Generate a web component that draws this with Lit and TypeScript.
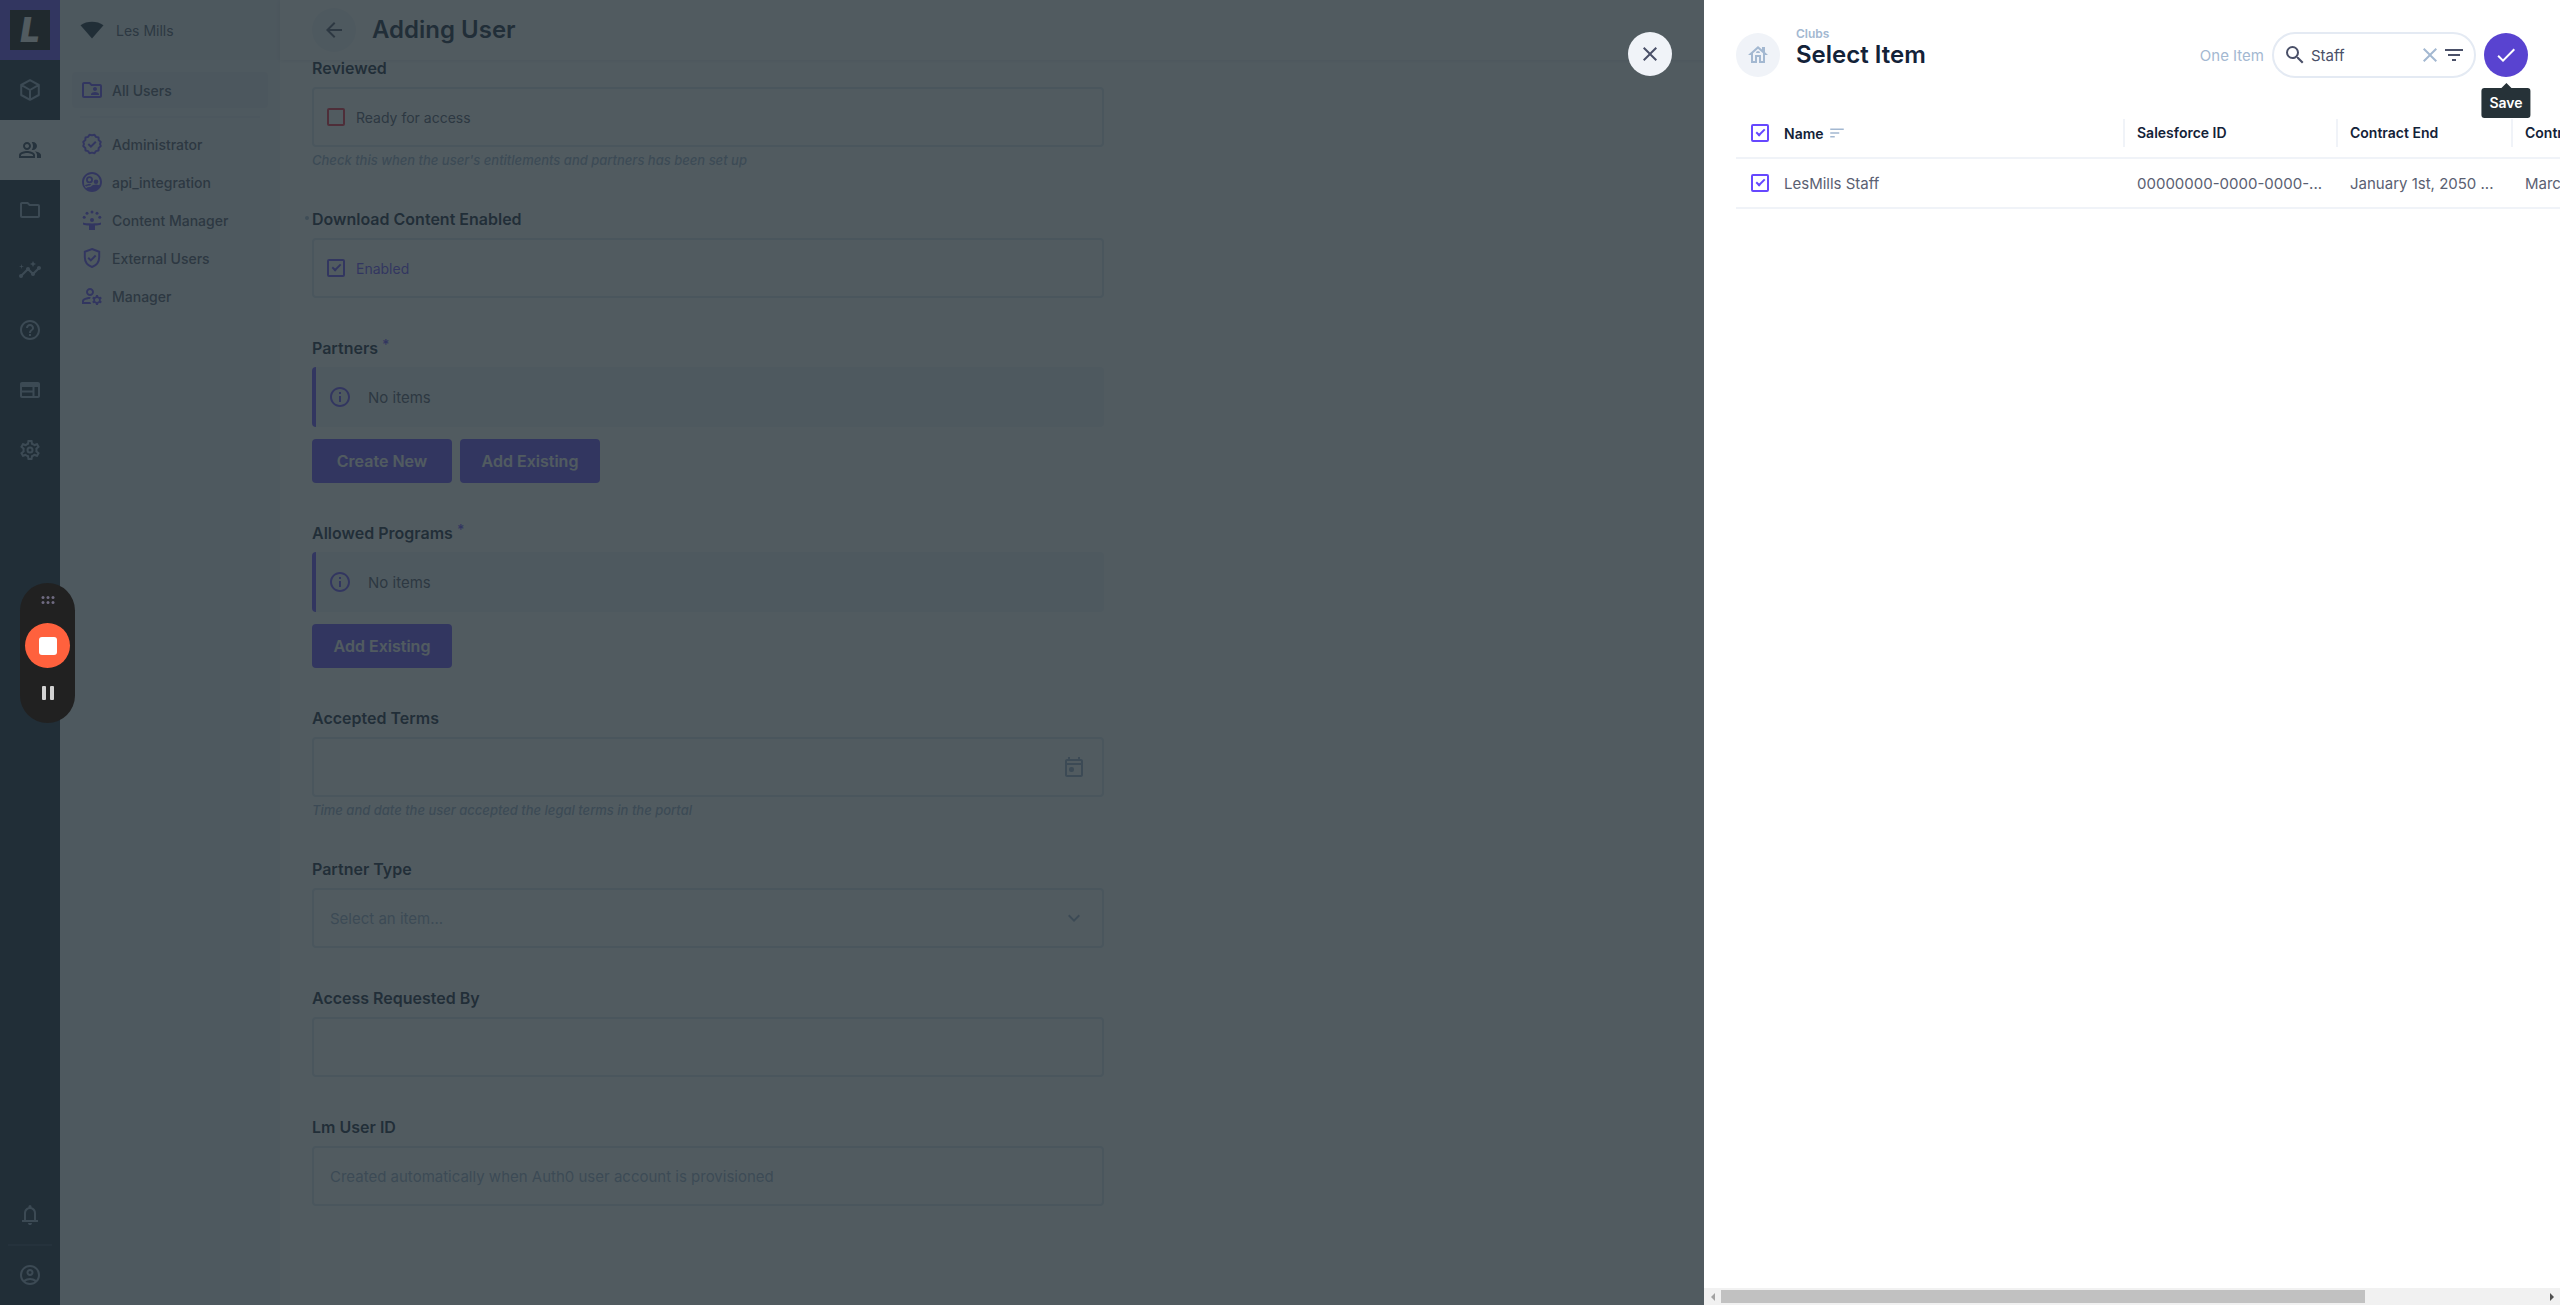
import { LitElement, html, css, svg, nothing } from "lit";
import { customElement, property } from "lit/decorators.js";
import { classMap } from "lit/directives/class-map.js";

const icons: Record<string, unknown> = {
  cube: svg`<path d="M12 2.2 20.8 7v10L12 21.8 3.2 17V7z M3.6 7.2 12 12l8.4-4.8 M12 12v9.6" fill="none" stroke="currentColor" stroke-width="2" stroke-linejoin="round"/>`,
  people: svg`<path d="M16.67 13.13C18.04 14.06 19 15.32 19 17v3h4v-3c0-2.18-3.57-3.47-6.33-3.87zM15 12c2.21 0 4-1.79 4-4s-1.79-4-4-4c-.47 0-.91.1-1.33.24C14.5 5.27 15 6.58 15 8s-.5 2.73-1.33 3.76c.42.14.86.24 1.33.24zM9 12c2.21 0 4-1.79 4-4s-1.79-4-4-4-4 1.79-4 4 1.79 4 4 4zm0-6c1.1 0 2 .9 2 2s-.9 2-2 2-2-.9-2-2 .9-2 2-2zM9 13c-2.67 0-8 1.34-8 4v3h16v-3c0-2.66-5.33-4-8-4zm6 5H3v-.99C3.2 16.29 6.3 15 9 15s5.8 1.29 6 2v1z"/>`,
  folder: svg`<path d="M9.17 6l2 2H20v10H4V6h5.17M10 4H4c-1.1 0-1.99.9-1.99 2L2 18c0 1.1.9 2 2 2h16c1.1 0 2-.9 2-2V8c0-1.1-.9-2-2-2h-8l-2-2z"/>`,
  insights: svg`<path d="M21 8c-1.45 0-2.26 1.44-1.93 2.51l-3.55 3.56c-.3-.09-.74-.09-1.04 0l-2.55-2.55C12.27 10.45 11.46 9 10 9c-1.45 0-2.27 1.44-1.93 2.52l-4.56 4.55C2.44 15.74 1 16.55 1 18c0 1.1.9 2 2 2 1.45 0 2.26-1.44 1.93-2.51l4.55-4.56c.3.09.74.09 1.04 0l2.55 2.55C12.73 16.55 13.54 18 15 18c1.45 0 2.27-1.44 1.93-2.52l3.56-3.55c1.07.33 2.51-.48 2.51-1.93 0-1.1-.9-2-2-2zM15 9l.94-2.07L18 6l-2.06-.93L15 3l-.92 2.07L12 6l2.08.93zM3.5 11L4 9l2-.5L4 8l-.5-2L3 8l-2 .5L3 9z"/>`,
  help: svg`<path d="M11 18h2v-2h-2v2zm1-16C6.48 2 2 6.48 2 12s4.48 10 10 10 10-4.48 10-10S17.52 2 12 2zm0 18c-4.41 0-8-3.59-8-8s3.59-8 8-8 8 3.59 8 8-3.59 8-8 8zm0-14c-2.21 0-4 1.79-4 4h2c0-1.1.9-2 2-2s2 .9 2 2c0 2-3 1.75-3 5h2c0-2.25 3-2.5 3-5 0-2.21-1.79-4-4-4z"/>`,
  web: svg`<path d="M20 4H4c-1.1 0-1.99.9-1.99 2L2 18c0 1.1.9 2 2 2h16c1.1 0 2-.9 2-2V6c0-1.1-.9-2-2-2zM4 9h10.5v3.5H4V9zm0 5.5h10.5V18H4v-3.5zM20 18h-3.5V9H20v9z"/>`,
  gear: svg`<path d="M19.43 12.98c.04-.32.07-.64.07-.98 0-.34-.03-.66-.07-.98l2.11-1.65c.19-.15.24-.42.12-.64l-2-3.46c-.09-.16-.26-.25-.44-.25-.06 0-.12.01-.17.03l-2.49 1c-.52-.4-1.08-.73-1.69-.98l-.38-2.65C14.46 2.18 14.25 2 14 2h-4c-.25 0-.46.18-.49.42l-.38 2.65c-.61.25-1.17.59-1.69.98l-2.49-1c-.06-.02-.12-.03-.18-.03-.17 0-.34.09-.43.25l-2 3.46c-.13.22-.07.49.12.64l2.11 1.65c-.04.32-.07.65-.07.98 0 .33.03.66.07.98l-2.11 1.65c-.19.15-.24.42-.12.64l2 3.46c.09.16.26.25.44.25.06 0 .12-.01.17-.03l2.49-1c.52.4 1.08.73 1.69.98l.38 2.65c.03.24.24.42.49.42h4c.25 0 .46-.18.49-.42l.38-2.65c.61-.25 1.17-.59 1.69-.98l2.49 1c.06.02.12.03.18.03.17 0 .34-.09.43-.25l2-3.46c.12-.22.07-.49-.12-.64l-2.11-1.65zm-1.98-1.71c.04.31.05.52.05.73 0 .21-.02.43-.05.73l-.14 1.13.89.7 1.08.84-.7 1.21-1.27-.51-1.04-.42-.9.68c-.43.32-.84.56-1.25.73l-1.06.43-.16 1.13-.2 1.35h-1.4l-.19-1.35-.16-1.13-1.06-.43c-.43-.18-.83-.41-1.23-.71l-.91-.7-1.06.43-1.27.51-.7-1.21 1.08-.84.89-.7-.14-1.13c-.03-.31-.05-.54-.05-.74s.02-.43.05-.73l.14-1.13-.89-.7-1.08-.84.7-1.21 1.27.51 1.04.42.9-.68c.43-.32.84-.56 1.25-.73l1.06-.43.16-1.13.2-1.35h1.39l.19 1.35.16 1.13 1.06.43c.43.18.83.41 1.23.71l.91.7 1.06-.43 1.27-.51.7 1.21-1.07.85-.89.7.14 1.13zM12 8.5a3.5 3.5 0 1 0 0 7 3.5 3.5 0 0 0 0-7zm0 5a1.5 1.5 0 1 1 0-3 1.5 1.5 0 0 1 0 3z"/>`,
  bell: svg`<path d="M4 19v-2h2v-7q0-2.075 1.25-3.687T10.5 4.2v-.7q0-.625.438-1.062T12 2t1.063.438T13.5 3.5v.7q2 .5 3.25 2.113T18 10v7h2v2zm8 3q-.825 0-1.412-.587T10 20h4q0 .825-.587 1.413T12 22m-4-5h8v-7q0-1.65-1.175-2.825T12 6T9.175 7.175T8 10z"/>`,
  account: svg`<path d="M5.85 17.1q1.275-.975 2.85-1.537T12 15t3.3.563t2.85 1.537q.875-1.025 1.363-2.325T20 12q0-3.325-2.337-5.663T12 4T6.337 6.338T4 12q0 1.475.488 2.775T5.85 17.1M12 13q-1.475 0-2.488-1.012T8.5 9.5t1.013-2.488T12 6t2.488 1.013T15.5 9.5t-1.012 2.488T12 13m0 9q-2.075 0-3.9-.788t-3.175-2.137T2.788 15.9T2 12t.788-3.9t2.137-3.175T8.1 2.788T12 2t3.9.788t3.175 2.137T21.213 8.1T22 12t-.788 3.9t-2.137 3.175t-3.175 2.138T12 22m0-2q1.325 0 2.5-.387t2.15-1.113q-.975-.725-2.15-1.112T12 17t-2.5.388T7.35 18.5q.975.725 2.15 1.113T12 20m0-9q.65 0 1.075-.425T13.5 9.5t-.425-1.075T12 8t-1.075.425T10.5 9.5t.425 1.075T12 11"/>`,
  wedge: svg`<path d="M12 20.5.5 7.2C3.8 4.9 7.8 3.8 12 3.8s8.2 1.1 11.5 3.4z"/>`,
  folderShared: svg`<path d="M20 6h-8l-2-2H4c-1.1 0-1.99.9-1.99 2L2 18c0 1.1.9 2 2 2h16c1.1 0 2-.9 2-2V8c0-1.1-.9-2-2-2zm0 12H4V6h5.17l2 2H20v10zm-5-5c1.1 0 2-.9 2-2s-.9-2-2-2-2 .9-2 2 .9 2 2 2zm-4 4h8v-1c0-1.33-2.67-2-4-2s-4 .67-4 2v1z"/>`,
  badge: svg`<path d="M12 3.2 14.5 2.7 15.9 4.9 18.5 5.5 18.7 8.1 20.8 9.9 20 12 20.8 14.1 18.7 15.9 18.5 18.5 15.9 19.1 14.5 21.3 12 20.6 9.5 21.3 8.1 19.1 5.5 18.5 5.3 15.9 3.2 14.1 4 12 3.2 9.9 5.3 8.1 5.5 5.5 8.1 4.9 9.5 2.7z" fill="none" stroke="currentColor" stroke-width="2" stroke-linejoin="round"/><path d="m8.3 12 2.6 2.6 4.9-4.9" fill="none" stroke="currentColor" stroke-width="2"/>`,
  supervised: svg`<path d="M12 2C6.48 2 2 6.48 2 12s4.48 10 10 10 10-4.48 10-10S17.52 2 12 2zM4 12c0-4.41 3.59-8 8-8s8 3.59 8 8c0 1.2-.27 2.34-.74 3.36-.95-.64-2.27-.96-3.26-.96-1.52 0-4.5.78-5.14 2.44-.44.04-.9.16-1.36.16-1.35 0-2.59.44-3.57 1.17A7.92 7.92 0 0 1 4 12zm2.26 4.6c1-.73 2.24-1.16 3.74-1.16l1.3-1.3c-.5-.15-1.1-.24-1.8-.24-1.6 0-3.5.55-4.6 1.4.3.48.8.95 1.36 1.3z" fill-rule="evenodd"/><circle cx="9.5" cy="9.8" r="2.6" fill="none" stroke="currentColor" stroke-width="1.8"/><circle cx="16" cy="11.8" r="2.3"/>`,
  panel: svg`<path d="M3 14.5C6 15.7 18 15.7 21 14.5V16.5C19.5 17.2 17 17.4 15 17.5V22H9v-4.5C7 17.4 4.5 17.2 3 16.5z"/><circle cx="12" cy="12" r="2"/><circle cx="12" cy="4" r="1.5"/><circle cx="7" cy="5.2" r="1.5"/><circle cx="17" cy="5.2" r="1.5"/><circle cx="4.2" cy="9.2" r="1.5"/><circle cx="19.8" cy="9.2" r="1.5"/>`,
  shield: svg`<path d="M12 3 19.2 5.7V11c0 4.7-3 8.5-7.2 10-4.2-1.5-7.2-5.3-7.2-10V5.7z" fill="none" stroke="currentColor" stroke-width="2"/><path d="m8.2 11.8 2.6 2.6 4.9-4.9" fill="none" stroke="currentColor" stroke-width="2"/>`,
  manage: svg`<path d="M4 18v-.65c0-.34.16-.66.41-.81C6.1 15.53 8.03 15 10 15c.03 0 .05 0 .08.01.1-.7.3-1.37.59-1.98-.22-.02-.44-.03-.67-.03-2.42 0-4.68.67-6.61 1.82-.88.52-1.39 1.5-1.39 2.53V20h9.26c-.42-.6-.75-1.28-.97-2H4zM10 12c2.21 0 4-1.79 4-4s-1.79-4-4-4-4 1.79-4 4 1.79 4 4 4zm0-6c1.1 0 2 .9 2 2s-.9 2-2 2-2-.9-2-2 .9-2 2-2zM20.75 16c0-.22-.03-.42-.06-.63l1.14-1.01-1-1.73-1.45.49c-.32-.27-.68-.48-1.08-.63L18 11h-2l-.3 1.49c-.4.15-.76.36-1.08.63l-1.45-.49-1 1.73 1.14 1.01c-.03.21-.06.41-.06.63s.03.42.06.63l-1.14 1.01 1 1.73 1.45-.49c.32.27.68.48 1.08.63L16 21h2l.3-1.49c.4-.15.76-.36 1.08-.63l1.45.49 1-1.73-1.14-1.01c.03-.21.06-.41.06-.63zM17 18c-1.1 0-2-.9-2-2s.9-2 2-2 2 .9 2 2-.9 2-2 2z"/>`,
  back: svg`<path d="M20 11H7.83l5.59-5.59L12 4l-8 8 8 8 1.41-1.41L7.83 13H20z"/>`,
  close: svg`<path d="M19 6.41 17.59 5 12 10.59 6.41 5 5 6.41 10.59 12 5 17.59 6.41 19 12 13.41 17.59 19 19 17.59 13.41 12z"/>`,
  home: svg`<path d="M19 9.3V4h-3v2.6L12 3 2 12h3v8h6v-6h2v6h6v-8h3zM17 18h-2v-6H9v6H7v-7.81l5-4.5 5 4.5z"/><path d="M10 10h4c0-1.1-.9-2-2-2s-2 .9-2 2z"/>`,
  info: svg`<path d="M11 7h2v2h-2zm0 4h2v6h-2zm1-9C6.48 2 2 6.48 2 12s4.48 10 10 10 10-4.48 10-10S17.52 2 12 2zm0 18c-4.41 0-8-3.59-8-8s3.59-8 8-8 8 3.59 8 8-3.59 8-8 8z"/>`,
  calendar: svg`<path d="M19 4h-1V2h-2v2H8V2H6v2H5c-1.11 0-1.99.9-1.99 2L3 20c0 1.1.89 2 2 2h14c1.1 0 2-.9 2-2V6c0-1.1-.9-2-2-2zm0 16H5V10h14v10zm0-12H5V6h14v2z"/><rect x="7" y="12" width="5" height="5" rx="2"/>`,
  chevron: svg`<path d="M7.41 8.59 12 13.17l4.59-4.58L18 10l-6 6-6-6z"/>`,
  sort: svg`<path d="M3 18h6v-2H3v2zM3 6v2h18V6H3zm0 7h12v-2H3v2z"/>`,
  search: svg`<path d="M15.5 14h-.79l-.28-.27A6.471 6.471 0 0 0 16 9.5 6.5 6.5 0 1 0 9.5 16c1.61 0 3.09-.59 4.23-1.57l.27.28v.79l5 4.99L20.49 19l-4.99-5zm-6 0C7.01 14 5 11.99 5 9.5S7.01 5 9.5 5 14 7.01 14 9.5 11.99 14 9.5 14z"/>`,
  filter: svg`<path d="M10 18h4v-2h-4v2zM3 6v2h18V6H3zm3 7h12v-2H6v2z"/>`,
  check: svg`<path d="M9 16.17 4.83 12l-1.42 1.41L9 19 21 7l-1.41-1.41z"/>`,
};

@customElement("ui-icon")
class UiIcon extends LitElement {
  @property() name = "";
  static styles = css`
    :host { display: inline-flex; flex: none; width: 24px; height: 24px; }
    svg { width: 100%; height: 100%; fill: currentColor; }
  `;
  render() {
    return html`<svg viewBox="0 0 24 24" aria-hidden="true">${icons[this.name]}</svg>`;
  }
}

interface NavItem { icon: string; label: string; active?: boolean }

const railItems: NavItem[] = [
  { icon: "cube", label: "Products" },
  { icon: "people", label: "Users", active: true },
  { icon: "folder", label: "Files" },
  { icon: "insights", label: "Insights" },
  { icon: "help", label: "Help" },
  { icon: "web", label: "Pages" },
  { icon: "gear", label: "Settings" },
];

const roleItems: NavItem[] = [
  { icon: "badge", label: "Administrator" },
  { icon: "supervised", label: "api_integration" },
  { icon: "panel", label: "Content Manager" },
  { icon: "shield", label: "External Users" },
  { icon: "manage", label: "Manager" },
];

@customElement("app-root")
class AppRoot extends LitElement {
  static styles = css`
    :host {
      display: block;
      height: 100vh;
      overflow: hidden;
      position: relative;
      font-family: Inter, "Liberation Sans", sans-serif;
      font-optical-sizing: none;
      font-size: 14px;
      color: #132238;
      --purple: #6648ff;
      --slate: #4a5068;
      --mist: #a3b8d1;
      --pale: #f0f3f8;
      --line: #e4eaf3;
    }
    *, *::before, *::after { box-sizing: border-box; }
    button, input, select { font: inherit; color: inherit; margin: 0; }
    button { border: 0; padding: 0; background: none; display: inline-flex; align-items: center; justify-content: center; }
    a { color: inherit; text-decoration: none; }
    h1, h2, p { margin: 0; font-weight: inherit; }

    .page { display: grid; grid-template-columns: 60px 220px 1fr; height: 100%; background: #fff; }

    .rail { display: flex; flex-direction: column; background: #132235; color: #94a8c4; }
    .rail a { display: flex; align-items: center; justify-content: center; height: 60px; }
    .rail a.active { background: var(--pale); color: #2c3a52; }
    .rail a.logo { background: var(--purple); }
    .logo-mark { display: flex; align-items: center; justify-content: center; width: 40px; height: 40px; background: #0a0505; color: #fff; font: italic 900 34px/40px Inter, sans-serif; }
    .spacer { flex: 1; }
    .rail hr { width: 44px; height: 2px; margin: -1px auto; border: 0; background: #25344a; }

    .side { background: var(--pale); color: var(--slate); }
    .brand { display: flex; align-items: center; gap: 12px; height: 60px; padding: 0 20px; background: #e9edf4; }
    .brand ui-icon { color: #132235; }
    .menu { display: flex; flex-direction: column; gap: 2px; padding: 12px 12px 0; font-weight: 500; }
    .menu a { display: flex; align-items: center; gap: 8px; height: 36px; padding: 0 8px; border-radius: 4px; }
    .menu a.active { background: #e6ebf2; }
    .menu ui-icon { color: var(--purple); }
    .menu hr { width: 180px; height: 2px; margin: 6px auto; border: 0; background: #e6ebf2; }

    .content { min-width: 0; --line: #dae3ee; }
    .topbar { display: flex; align-items: center; gap: 16px; height: 60px; padding: 0 32px; box-shadow: 0 1px 4px rgba(19, 34, 56, 0.1); }
    .round { width: 44px; height: 44px; border-radius: 50%; background: var(--pale); flex: none; color: var(--slate); }
    .title { font-size: 24px; line-height: 28px; font-weight: 600; }
    .form { display: flex; flex-direction: column; gap: 42px; max-width: 856px; padding: 0 32px; }
    .field { display: flex; flex-direction: column; }
    .label { position: relative; align-self: flex-start; margin-bottom: 11px; font-size: 16px; line-height: 16px; font-weight: 600; }
    .req { color: var(--purple); font-size: 14px; vertical-align: 4px; line-height: 1px; }
    .dot { position: absolute; left: -7px; top: 5px; width: 4px; height: 4px; border-radius: 50%; background: var(--mist); }
    .control { display: flex; align-items: center; height: 60px; padding: 0 16px; border: 2px solid var(--line); border-radius: 4px; color: #96acc8; }
    .control.tick { padding: 0 13px; gap: 11px; color: var(--slate); }
    .control.tick.on { color: var(--purple); }
    .control input[type="text"], .control select { flex: 1; min-width: 0; height: 100%; padding: 0; border: 0; outline: 0; background: none; appearance: none; font-size: 15px; }
    .control input::placeholder { color: inherit; opacity: 1; }
    .helper { padding-top: 4px; font-size: 13px; line-height: 18px; font-style: italic; font-weight: 500; color: #96acc8; }
    .notice { display: flex; align-items: center; gap: 16px; height: 60px; padding: 0 12px; border-left: 4px solid var(--purple); border-radius: 4px; background: var(--pale); color: var(--slate); font-size: 15px; }
    .notice ui-icon { color: var(--purple); }
    .actions { display: flex; gap: 8px; margin-top: 12px; }
    .actions button { min-width: 140px; height: 44px; padding: 0 16px; border-radius: 4px; background: var(--purple); color: #fff; font-size: 16px; font-weight: 600; }

    input[type="checkbox"] { display: grid; place-items: center; flex: none; width: 18px; height: 18px; border: 2px solid var(--purple); border-radius: 2px; appearance: none; }
    input[type="checkbox"]:checked::after { content: ""; width: 5px; height: 9px; margin-top: -3px; border: solid var(--purple); border-width: 0 2px 2px 0; transform: rotate(45deg); }
    input.bad { border-color: #f0203c; }

    .modal { position: absolute; inset: 0; display: flex; justify-content: flex-end; background: rgba(38, 50, 56, 0.8); }
    .modal > .round { margin: 32px 32px 0 0; }
    .drawer { display: flex; flex-direction: column; width: 856px; max-width: 100%; background: #fff; }
    .head { display: flex; align-items: flex-start; gap: 16px; padding: 32px 32px 0; height: 109px; }
    .head .round { display: flex; align-items: center; justify-content: center; margin-top: 1px; color: var(--mist); }
    .titles { flex: 1; margin-top: -5px; }
    .crumb { font-size: 12px; line-height: 14px; font-weight: 600; color: var(--mist); }
    .tools { display: flex; align-items: center; gap: 8px; height: 46px; }
    .count { font-size: 15px; color: var(--mist); }
    .search { display: flex; align-items: center; width: 204px; height: 46px; padding: 0 8px 0 9px; border: 2px solid var(--line); border-radius: 23px; color: var(--slate); }
    .search input { flex: 1; min-width: 0; margin-left: 4px; padding: 0; border: 0; outline: 0; background: none; font-size: 15px; }
    .search .clear { color: var(--mist); }
    .search ui-icon { display: flex; }
    .save-wrap { position: relative; display: flex; }
    .save { width: 44px; height: 44px; border-radius: 50%; background: #5943d0; color: #fff; }
    .tip { position: absolute; top: 55px; left: 50%; transform: translateX(-50%); padding: 0 8px; border-radius: 3px; background: #263238; color: #fff; font-size: 14px; line-height: 30px; font-weight: 600; }
    .tip::before { content: ""; position: absolute; left: 50%; bottom: 100%; margin-left: -5px; border: solid transparent; border-width: 0 5px 5px; border-bottom-color: #263238; }

    .grid { flex: 1; min-height: 0; overflow: hidden; padding-left: 32px; }
    table { width: 1028px; table-layout: fixed; border-collapse: separate; border-spacing: 0; text-align: left; }
    th, td { height: 50px; padding: 0 12px; border-bottom: 2px solid var(--pale); overflow: hidden; text-overflow: ellipsis; white-space: nowrap; }
    th { font-size: 14px; font-weight: 600; }
    td { font-size: 15px; color: #5a6072; }
    .pick { padding: 0 15px; }
    .pick + .name { padding-left: 0; }
    th.sep { padding: 0; }
    .sep span { display: block; padding-left: 12px; line-height: 28px; border-left: 2px solid var(--pale); }
    td.cell { padding: 0 0 0 14px; }
    .name span { display: flex; align-items: center; gap: 4px; }
    .name ui-icon { width: 18px; height: 18px; color: var(--mist); }
    .c-pick { width: 48px; }
    .c-name { width: 339px; }
    .c-id { width: 213px; }
    .c-end { width: 175px; }

    .bar { display: flex; height: 17px; background: #f1f1f1; }
    .bar button { width: 17px; }
    .bar i { width: 0; height: 0; border: 4px solid transparent; }
    .bar .prev i { border-left-width: 0; border-right-color: #a3a3a3; }
    .bar .next i { border-right-width: 0; border-left-color: #505050; }
    .track { flex: 1; padding: 2px 0; }
    .thumb { width: 78.4%; height: 13px; background: #c1c1c1; }

    .recorder { position: absolute; left: 20px; top: 583px; display: flex; flex-direction: column; align-items: center; width: 55px; height: 140px; padding-top: 12px; border-radius: 28px; background: #212121; }
    .recorder svg { display: block; }
    .stop { width: 45px; height: 45px; margin: 18px 0; border-radius: 50%; background: #ff613d; }
    .stop i { width: 18px; height: 18px; border-radius: 3px; background: #fff; }
    .pause { gap: 4px; }
    .pause i { width: 4px; height: 14px; border-radius: 1px; background: #d2d2d2; }
  `;

  private link(item: NavItem, labelled: boolean) {
    return html`<a href="#" class=${classMap({ active: !!item.active })} aria-label=${item.label}>
      <ui-icon name=${item.icon}></ui-icon>${labelled ? item.label : nothing}</a>`;
  }

  private notice(title: string, actions: string[]) {
    return html`<section class="field">
      <h2 class="label">${title} <span class="req">*</span></h2>
      <div class="notice"><ui-icon name="info"></ui-icon>No items</div>
      <div class="actions">${actions.map((a) => html`<button type="button">${a}</button>`)}</div>
    </section>`;
  }

  private tick(id: string, title: string, text: string, on: boolean, extra: unknown = nothing) {
    return html`<div class="field">
      <h2 class="label">${on ? html`<span class="dot"></span>` : nothing}${title}</h2>
      <label class=${classMap({ control: true, tick: true, on })} for=${id}>
        <input type="checkbox" id=${id} class=${on ? "" : "bad"} .checked=${on} />${text}
      </label>
      ${extra}
    </div>`;
  }

  render() {
    return html`
      <div class="page">
        <nav class="rail" aria-label="Main">
          <a href="#" class="logo" aria-label="Home"><span class="logo-mark">L</span></a>
          ${railItems.map((i) => this.link(i, false))}
          <div class="spacer"></div>
          ${this.link({ icon: "bell", label: "Notifications" }, false)}
          <hr />
          ${this.link({ icon: "account", label: "Account" }, false)}
        </nav>
        <aside class="side">
          <div class="brand"><ui-icon name="wedge"></ui-icon>Les Mills</div>
          <nav class="menu" aria-label="Users">
            ${this.link({ icon: "folderShared", label: "All Users", active: true }, true)}
            <hr />
            ${roleItems.map((i) => this.link(i, true))}
          </nav>
        </aside>
        <main class="content">
          <header class="topbar">
            <button class="round" type="button" aria-label="Back"><ui-icon name="back"></ui-icon></button>
            <h1 class="title">Adding User</h1>
          </header>
          <form class="form">
            ${this.tick("ready", "Reviewed", "Ready for access", false,
              html`<p class="helper">Check this when the user's entitlements and partners has been set up</p>`)}
            ${this.tick("download", "Download Content Enabled", "Enabled", true)}
            ${this.notice("Partners", ["Create New", "Add Existing"])}
            ${this.notice("Allowed Programs", ["Add Existing"])}
            <div class="field">
              <label class="label" for="terms">Accepted Terms</label>
              <div class="control"><input type="text" id="terms" />
                <button type="button" aria-label="Choose date"><ui-icon name="calendar"></ui-icon></button></div>
              <p class="helper">Time and date the user accepted the legal terms in the portal</p>
            </div>
            <div class="field">
              <label class="label" for="ptype">Partner Type</label>
              <div class="control"><select id="ptype"><option>Select an item...</option></select>
                <ui-icon name="chevron"></ui-icon></div>
            </div>
            <div class="field">
              <label class="label" for="requested">Access Requested By</label>
              <div class="control"><input type="text" id="requested" /></div>
            </div>
            <div class="field">
              <label class="label" for="lmid">Lm User ID</label>
              <div class="control"><input type="text" id="lmid" placeholder="Created automatically when Auth0 user account is provisioned" /></div>
            </div>
          </form>
        </main>
      </div>

      <div class="modal">
        <button class="round" type="button" aria-label="Close"><ui-icon name="close"></ui-icon></button>
        <section class="drawer" role="dialog" aria-label="Select Item">
          <header class="head">
            <div class="round"><ui-icon name="home"></ui-icon></div>
            <div class="titles">
              <p class="crumb">Clubs</p>
              <h2 class="title">Select Item</h2>
            </div>
            <div class="tools">
              <span class="count">One Item</span>
              <div class="search">
                <ui-icon name="search"></ui-icon>
                <input type="text" aria-label="Search" .value=${"Staff"} />
                <button class="clear" type="button" aria-label="Clear"><ui-icon name="close"></ui-icon></button>
                <button type="button" aria-label="Filter"><ui-icon name="filter"></ui-icon></button>
              </div>
              <div class="save-wrap">
                <button class="save" type="button" aria-label="Save"><ui-icon name="check"></ui-icon></button>
                <span class="tip" role="tooltip">Save</span>
              </div>
            </div>
          </header>
          <div class="grid">
            <table>
              <colgroup><col class="c-pick" /><col class="c-name" /><col class="c-id" /><col class="c-end" /><col /></colgroup>
              <thead><tr>
                <th class="pick"><input type="checkbox" aria-label="Select all" .checked=${true} /></th>
                <th class="name"><span>Name <ui-icon name="sort"></ui-icon></span></th>
                <th class="sep"><span>Salesforce ID</span></th>
                <th class="sep"><span>Contract End</span></th>
                <th class="sep"><span>Contract Start</span></th>
              </tr></thead>
              <tbody><tr>
                <td class="pick"><input type="checkbox" aria-label="Select LesMills Staff" .checked=${true} /></td>
                <td class="name">LesMills Staff</td>
                <td class="cell">00000000-0000-0000-...</td>
                <td class="cell">January 1st, 2050 ...</td>
                <td class="cell">March</td>
              </tr></tbody>
            </table>
          </div>
          <div class="bar">
            <button class="prev" type="button" aria-label="Scroll left"><i></i></button>
            <div class="track"><div class="thumb"></div></div>
            <button class="next" type="button" aria-label="Scroll right"><i></i></button>
          </div>
        </section>
      </div>

      <div class="recorder">
        <svg width="14" height="10" viewBox="0 0 14 10" fill="#6f6a80"><circle cx="2" cy="2.5" r="1.5"/><circle cx="7" cy="2.5" r="1.5"/><circle cx="12" cy="2.5" r="1.5"/><circle cx="2" cy="7.5" r="1.5"/><circle cx="7" cy="7.5" r="1.5"/><circle cx="12" cy="7.5" r="1.5"/></svg>
        <button class="stop" type="button" aria-label="Stop recording"><i></i></button>
        <button class="pause" type="button" aria-label="Pause recording"><i></i><i></i></button>
      </div>
    `;
  }
}
